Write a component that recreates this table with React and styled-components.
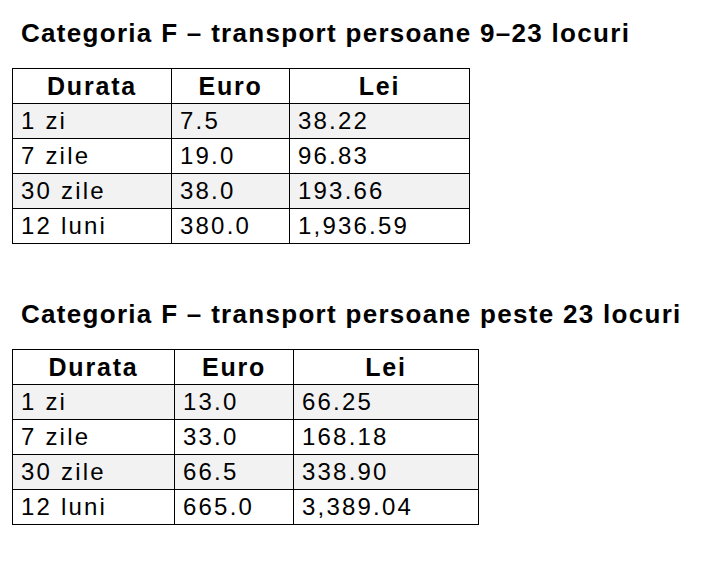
import React from 'react';
import styled, { createGlobalStyle } from 'styled-components';

const GlobalStyle = createGlobalStyle`
  body {
    margin: 0;
    background: #ffffff;
    font-family: "Liberation Sans", Arial, sans-serif;
    color: #000;
  }
`;

const Page = styled.div`
  display: flex;
  flex-direction: column;
  gap: 55px;
  padding: 18px 0 0 12px;
`;

const Section = styled.section`
  display: flex;
  flex-direction: column;
  gap: 20px;
`;

const Title = styled.h2`
  margin: 0 0 0 9px;
  font-size: 26px;
  line-height: 30px;
  font-weight: 700;
  letter-spacing: 1.3px;
  white-space: nowrap;
`;

const Table = styled.table`
  border-collapse: collapse;
  table-layout: fixed;
  width: ${p => p.$width}px;
`;

const Head = styled.th`
  border: 1px solid #000;
  height: 34px;
  padding: 0;
  font-size: 25px;
  font-weight: 700;
  letter-spacing: 1.8px;
  text-align: center;
  background: #fff;
`;

const Row = styled.tr`
  background: ${p => (p.$shaded ? '#f2f2f2' : '#ffffff')};
`;

const Cell = styled.td`
  border: 1px solid #000;
  height: 34px;
  padding: 0 0 0 8px;
  font-size: 24px;
  letter-spacing: 2.2px;
  white-space: nowrap;
`;

const tables = [
  {
    title: 'Categoria F – transport persoane 9–23 locuri',
    cols: [159, 118, 180],
    rows: [
      ['1 zi', '7.5', '38.22'],
      ['7 zile', '19.0', '96.83'],
      ['30 zile', '38.0', '193.66'],
      ['12 luni', '380.0', '1,936.59'],
    ],
  },
  {
    title: 'Categoria F – transport persoane peste 23 locuri',
    cols: [162, 119, 185],
    rows: [
      ['1 zi', '13.0', '66.25'],
      ['7 zile', '33.0', '168.18'],
      ['30 zile', '66.5', '338.90'],
      ['12 luni', '665.0', '3,389.04'],
    ],
  },
];

const PriceTable = ({ title, cols, rows }) => (
  <Section>
    <Title>{title}</Title>
    <Table $width={cols.reduce((a, b) => a + b, 0)}>
      <colgroup>
        {cols.map((w, i) => <col key={i} style={{ width: w }} />)}
      </colgroup>
      <thead>
        <tr>
          <Head>Durata</Head>
          <Head>Euro</Head>
          <Head>Lei</Head>
        </tr>
      </thead>
      <tbody>
        {rows.map((r, i) => (
          <Row key={i} $shaded={i % 2 === 0}>
            {r.map((c, j) => <Cell key={j}>{c}</Cell>)}
          </Row>
        ))}
      </tbody>
    </Table>
  </Section>
);

export default function App() {
  return (
    <>
      <GlobalStyle />
      <Page>
        {tables.map((t, i) => <PriceTable key={i} {...t} />)}
      </Page>
    </>
  );
}
